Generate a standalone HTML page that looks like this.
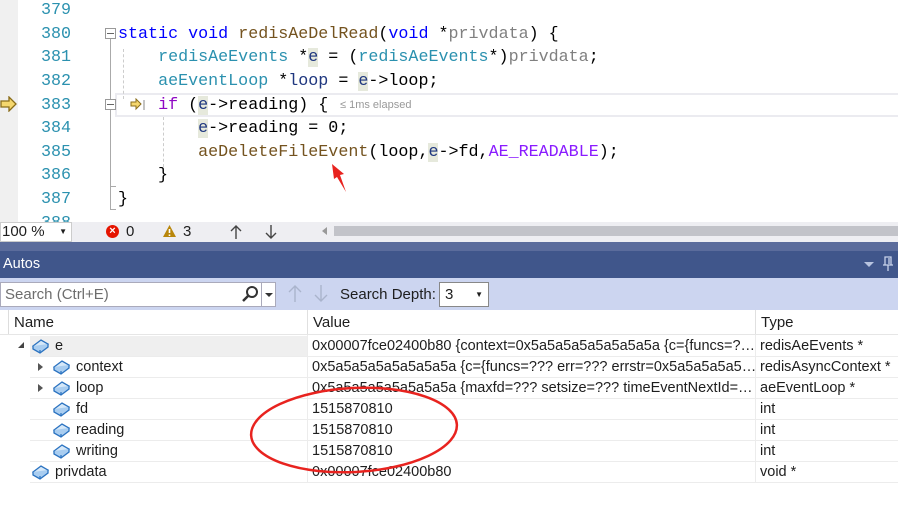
<!DOCTYPE html>
<html><head><meta charset="utf-8"><style>
*{margin:0;padding:0;box-sizing:border-box}
body{width:898px;height:513px;overflow:hidden;background:#fff;position:relative;font-family:"Liberation Sans",sans-serif}
.abs{position:absolute}
.code{font-family:"Liberation Mono",monospace;font-size:16.7px;white-space:pre;line-height:23.6px}
.ln{position:absolute;left:20px;width:51px;text-align:right;color:#2b91af}
.cl{position:absolute;left:118px;color:#000}
.k{color:#0000ff}.t{color:#2b91af}.f{color:#74531f}.v{color:#1f377f}.p{color:#808080}.m{color:#8a1bff}
.hl{background:#e6e9dc}
.ui{font-size:14px;color:#1e1e1e}
.row{position:absolute;left:30px;width:868px;height:21px;border-bottom:1px solid #ececec;font-size:14.5px;line-height:20px;color:#1e1e1e}
.row span{position:absolute;top:0}
.ic{position:absolute;top:2px}
</style></head><body>
<div class="abs" style="left:0;top:0;width:18px;height:222px;background:#f0f0f0"></div>
<div class="abs" style="left:115px;top:93px;width:783px;height:24px;border:2px solid #ebebf0;border-right:none"></div>
<div class="code" style="position:absolute;left:0;top:1px">
<div class="ln" style="top:-2px">379</div>
<div class="ln" style="top:22px">380</div>
<div class="ln" style="top:45px">381</div>
<div class="ln" style="top:69px">382</div>
<div class="ln" style="top:93px">383</div>
<div class="ln" style="top:116px">384</div>
<div class="ln" style="top:140px">385</div>
<div class="ln" style="top:163px">386</div>
<div class="ln" style="top:187px">387</div>
<div class="ln" style="top:211px">388</div>
<div class="cl" style="top:22px"><span class="k">static</span> <span class="k">void</span> <span class="f">redisAeDelRead</span>(<span class="k">void</span> *<span class="p">privdata</span>) {</div>
<div class="cl" style="top:45px">    <span class="t">redisAeEvents</span> *<span class="v hl">e</span> = (<span class="t">redisAeEvents</span>*)<span class="p">privdata</span>;</div>
<div class="cl" style="top:69px">    <span class="t">aeEventLoop</span> *<span class="v">loop</span> = <span class="v hl">e</span>-&gt;loop;</div>
<div class="cl" style="top:93px">    <span class="k" style="color:#8f08c4">if</span> (<span class="v hl">e</span>-&gt;reading) {</div>
<div class="cl" style="top:116px">        <span class="v hl">e</span>-&gt;reading = 0;</div>
<div class="cl" style="top:140px">        <span class="f">aeDeleteFileEvent</span>(loop,<span class="v hl">e</span>-&gt;fd,<span class="m">AE_READABLE</span>);</div>
<div class="cl" style="top:163px">    }</div>
<div class="cl" style="top:187px">}</div>
</div>
<div class="abs" style="left:340px;top:99px;font-size:11px;color:#999">≤ 1ms elapsed</div>
<div class="abs" style="left:105px;top:28px;width:11px;height:11px;border:1px solid #999;background:#fff"></div>
<div class="abs" style="left:107px;top:33px;width:7px;height:1px;background:#666"></div>
<div class="abs" style="left:110px;top:39px;width:1px;height:171px;background:#aaa"></div>
<div class="abs" style="left:110px;top:209px;width:6px;height:1px;background:#aaa"></div>
<div class="abs" style="left:105px;top:99px;width:11px;height:11px;border:1px solid #999;background:#fff"></div>
<div class="abs" style="left:107px;top:104px;width:7px;height:1px;background:#666"></div>
<div class="abs" style="left:110px;top:110px;width:1px;height:76px;background:#aaa"></div>
<div class="abs" style="left:110px;top:186px;width:6px;height:1px;background:#aaa"></div>
<div class="abs" style="left:123px;top:49px;width:0;height:50px;border-left:1px dashed #ccc"></div>
<div class="abs" style="left:163px;top:117px;width:0;height:50px;border-left:1px dashed #ccc"></div>
<svg class="abs" style="left:0;top:96px" width="18" height="16"><path d="M1 5h8V1l7 7-7 7v-4H1z" fill="#f5d76e" stroke="#8a6d1a" stroke-width="1.3"/></svg>
<svg class="abs" style="left:130px;top:98px" width="16" height="14"><path d="M1 4h5V1l5 5-5 5V8H1z" fill="#f5d76e" stroke="#8a6d1a" stroke-width="1"/><path d="M14 2v10" stroke="#888"/></svg>
<svg class="abs" style="left:328px;top:160px" width="24" height="36"><path d="M4 4 L16 14 L12 15 L18 32 L9 17 L6 19 Z" fill="#e8231f"/></svg>
<div class="abs" style="left:0;top:222px;width:898px;height:20px;background:#eeeef2"></div>
<div class="abs ui" style="left:0;top:222px;width:72px;height:20px;background:#fff;border:1px solid #ccc;padding-left:1px;line-height:18px;font-size:15px">100 %<span style="position:absolute;right:4px;top:0;font-size:8px">▼</span></div>
<div class="abs" style="left:106px;top:225px;width:13px;height:13px;border-radius:50%;background:#e51400;color:#fff;font-size:11px;line-height:13px;text-align:center;font-weight:bold">×</div>
<div class="abs ui" style="left:126px;top:223px;line-height:18px;font-size:15px">0</div>
<svg class="abs" style="left:162px;top:224px" width="15" height="14"><path d="M7.5 1L14 13H1z" fill="#b8860b"/><path d="M7.5 5v4M7.5 10.5v1.5" stroke="#fff" stroke-width="1.6"/></svg>
<div class="abs ui" style="left:183px;top:223px;line-height:18px;font-size:15px">3</div>
<svg class="abs" style="left:229px;top:224px" width="14" height="16"><path d="M7 2v13M2 7l5-5 5 5" stroke="#444" stroke-width="1.4" fill="none"/></svg>
<svg class="abs" style="left:264px;top:224px" width="14" height="16"><path d="M7 1v13M2 9l5 5 5-5" stroke="#444" stroke-width="1.4" fill="none"/></svg>
<div class="abs" style="left:322px;top:227px;border:4px solid transparent;border-right:5px solid #999;border-left:none"></div>
<div class="abs" style="left:334px;top:226px;width:564px;height:10px;background:#c2c3c9"></div>
<div class="abs" style="left:0;top:242px;width:898px;height:9px;background:#5b6c9c"></div>
<div class="abs" style="left:0;top:251px;width:898px;height:27px;background:#40568b;color:#fff;font-size:14.5px;line-height:27px;padding-left:3px">Autos</div>
<div class="abs" style="left:864px;top:262px;border:5px solid transparent;border-top:5px solid #b8c4e0;border-bottom:none"></div>
<svg class="abs" style="left:882px;top:256px" width="12" height="16"><path d="M3 1h6v8H3zM1 9h10M6 9v6M7 2v6" stroke="#c8d2ea" stroke-width="1.3" fill="none"/></svg>
<div class="abs" style="left:0;top:278px;width:898px;height:32px;background:#ccd5f0"></div>
<div class="abs ui" style="left:0;top:282px;width:276px;height:25px;background:#fff;border:1px solid #aab;line-height:23px;padding-left:4px;color:#6d6d6d;font-size:15px">Search (Ctrl+E)</div>
<svg class="abs" style="left:241px;top:285px" width="18" height="18"><circle cx="11" cy="7" r="5" fill="none" stroke="#333" stroke-width="2"/><path d="M7.5 10.5L2 16" stroke="#333" stroke-width="2.5"/></svg>
<div class="abs" style="left:261px;top:282px;width:1px;height:25px;background:#aab"></div>
<div class="abs" style="left:265px;top:293px;border:4px solid transparent;border-top:4px solid #333;border-bottom:none"></div>
<svg class="abs" style="left:287px;top:284px" width="16" height="20"><path d="M8 2v16M2 8l6-6 6 6" stroke="#aab4cc" stroke-width="1.4" fill="none"/></svg>
<svg class="abs" style="left:313px;top:284px" width="16" height="20"><path d="M8 1v16M2 11l6 6 6-6" stroke="#aab4cc" stroke-width="1.4" fill="none"/></svg>
<div class="abs ui" style="left:340px;top:286px;font-size:15px">Search Depth:</div>
<div class="abs ui" style="left:439px;top:282px;width:50px;height:25px;background:#fff;border:1px solid #888;line-height:23px;padding-left:5px;font-size:15px">3<span style="position:absolute;right:5px;top:0;font-size:8px">▼</span></div>
<div class="abs" style="left:8px;top:310px;width:1px;height:24px;background:#ddd"></div>
<div class="abs ui" style="left:14px;top:314px;font-size:15px">Name</div>
<div class="abs" style="left:307px;top:310px;width:1px;height:24px;background:#e0e0e0"></div>
<div class="abs ui" style="left:313px;top:314px;font-size:15px">Value</div>
<div class="abs" style="left:755px;top:310px;width:1px;height:24px;background:#e0e0e0"></div>
<div class="abs ui" style="left:761px;top:314px;font-size:15px">Type</div>
<div class="abs" style="left:0;top:334px;width:898px;height:1px;background:#e6e6e6"></div>
<svg width="0" height="0" style="position:absolute"><defs><g id="cube"><path d="M1 8L9 2l7 4-8 6z" fill="#d6e8f8" stroke="#2a72c0" stroke-width="1.3"/><path d="M1 8v3l7 4 8-6V6" fill="#a9cdf0" stroke="#2a72c0" stroke-width="1.3"/><path d="M8 12v3" stroke="#2a72c0" stroke-width="1.2"/></g></defs></svg>
<div class="row" style="top:336px;background:#efefef;left:30px;width:278px"></div>
<svg class="abs" style="left:17px;top:341px" width="8" height="8"><path d="M7 1V7H1z" fill="#444"/></svg>
<div class="row" style="top:336px"><svg class="ic" style="left:2px" width="17" height="16"><use href="#cube"/></svg><span style="left:25px">e</span><span style="left:282px">0x00007fce02400b80 {context=0x5a5a5a5a5a5a5a5a {c={funcs=?…</span><span style="left:730px">redisAeEvents *</span></div>
<div class="row" style="top:357px"><span style="left:8px;top:6px;border:4px solid transparent;border-left:5px solid #555;border-right:none"></span><svg class="ic" style="left:23px" width="17" height="16"><use href="#cube"/></svg><span style="left:46px">context</span><span style="left:282px">0x5a5a5a5a5a5a5a5a {c={funcs=??? err=??? errstr=0x5a5a5a5a5…</span><span style="left:730px">redisAsyncContext *</span></div>
<div class="row" style="top:378px"><span style="left:8px;top:6px;border:4px solid transparent;border-left:5px solid #555;border-right:none"></span><svg class="ic" style="left:23px" width="17" height="16"><use href="#cube"/></svg><span style="left:46px">loop</span><span style="left:282px">0x5a5a5a5a5a5a5a5a {maxfd=??? setsize=??? timeEventNextId=…</span><span style="left:730px">aeEventLoop *</span></div>
<div class="row" style="top:399px"><svg class="ic" style="left:23px" width="17" height="16"><use href="#cube"/></svg><span style="left:46px">fd</span><span style="left:282px">1515870810</span><span style="left:730px">int</span></div>
<div class="row" style="top:420px"><svg class="ic" style="left:23px" width="17" height="16"><use href="#cube"/></svg><span style="left:46px">reading</span><span style="left:282px">1515870810</span><span style="left:730px">int</span></div>
<div class="row" style="top:441px"><svg class="ic" style="left:23px" width="17" height="16"><use href="#cube"/></svg><span style="left:46px">writing</span><span style="left:282px">1515870810</span><span style="left:730px">int</span></div>
<div class="row" style="top:462px"><svg class="ic" style="left:2px" width="17" height="16"><use href="#cube"/></svg><span style="left:25px">privdata</span><span style="left:282px">0x00007fce02400b80</span><span style="left:730px">void *</span></div>
<div class="abs" style="left:307px;top:335px;width:1px;height:148px;background:#ececec"></div>
<div class="abs" style="left:755px;top:335px;width:1px;height:148px;background:#ececec"></div>
<svg class="abs" style="left:0;top:0" width="898" height="513"><ellipse cx="354" cy="430" rx="103" ry="42" fill="none" stroke="#e8231f" stroke-width="2.5" transform="rotate(-3 354 430)"/></svg>
</body></html>
